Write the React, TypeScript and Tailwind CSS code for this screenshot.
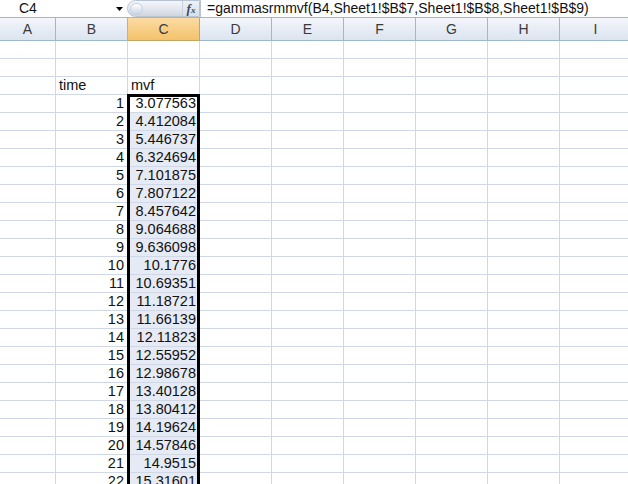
import React from "react";

const data: [number, string][] = [
  [1, "3.077563"],
  [2, "4.412084"],
  [3, "5.446737"],
  [4, "6.324694"],
  [5, "7.101875"],
  [6, "7.807122"],
  [7, "8.457642"],
  [8, "9.064688"],
  [9, "9.636098"],
  [10, "10.1776"],
  [11, "10.69351"],
  [12, "11.18721"],
  [13, "11.66139"],
  [14, "12.11823"],
  [15, "12.55952"],
  [16, "12.98678"],
  [17, "13.40128"],
  [18, "13.80412"],
  [19, "14.19624"],
  [20, "14.57846"],
  [21, "14.9515"],
  [22, "15.31601"],
];

const cols = ["A", "B", "C", "D", "E", "F", "G", "H", "I"];
const widths = ["w-[56px]", "w-[72px]", "w-[72px]", "w-[72px]", "w-[72px]", "w-[72px]", "w-[72px]", "w-[72px]", "w-[72px]"];

function Row({ b, c, kind }: { b?: React.ReactNode; c?: React.ReactNode; kind: "plain" | "label" | "active" | "sel" }) {
  return (
    <div className="flex h-[18px] shrink-0">
      {cols.map((col, i) => {
        let bg = "bg-white";
        if (i === 2 && kind === "sel") bg = "bg-[#e6eaf4]";
        let content: React.ReactNode = null;
        let align = "justify-end pr-[3px]";
        if (i === 1) {
          content = b;
          if (kind === "label") align = "justify-start pl-[3px]";
        }
        if (i === 2) {
          content = c;
          if (kind === "label") align = "justify-start pl-[3px]";
        }
        return (
          <div
            key={col}
            className={`${widths[i]} shrink-0 h-full border-r border-b border-[#d0d7e5] ${bg} flex items-center ${align} text-[14.5px] leading-none text-[#111] overflow-hidden whitespace-nowrap`}
          >
            {content}
          </div>
        );
      })}
    </div>
  );
}

export default function App() {
  return (
    <div
      className="w-[628px] h-[484px] overflow-hidden bg-white relative"
      style={{ fontFamily: '"Liberation Sans", Arial, sans-serif' }}
    >
      {/* Formula bar */}
      <div className="flex h-[18px] items-center bg-white border-b border-[#a5b6cc]">
        <div className="w-[112px] h-full flex items-center pl-[19px] text-[14px] text-[#111]">C4</div>
        <div className="w-[15px] h-full flex items-center justify-center">
          <svg width="7" height="4" viewBox="0 0 7 4">
            <path d="M0 0 H7 L3.5 4 Z" fill="#000" />
          </svg>
        </div>
        <div className="relative w-[73px] h-[17px] rounded-l-full bg-gradient-to-b from-[#f4f6fa] via-[#e4e8ef] to-[#cfd6e1] border border-[#b8c3d2] flex items-center">
          <div className="absolute left-[2px] top-[2px] w-[13px] h-[12px] rounded-full bg-gradient-to-b from-[#ffffff] to-[#c9d6e6] border border-[#c5cfdc]" />
          <div className="ml-auto w-[17px] h-full flex items-center justify-center border-l border-[#c8d0dc] bg-gradient-to-b from-[#eef2f8] to-[#d7dfea]">
            <span
              className="text-[13px] italic font-bold text-[#3b4a66] leading-none"
              style={{ fontFamily: '"Liberation Serif", serif' }}
            >
              f<span className="text-[9px]">x</span>
            </span>
          </div>
        </div>
        <div className="flex-1 h-full flex items-center pl-[6px] text-[14px] text-[#111] whitespace-nowrap overflow-hidden border-l border-[#b8c3d2]">
          =gammasrmmvf(B4,Sheet1!$B$7,Sheet1!$B$8,Sheet1!$B$9)
        </div>
      </div>

      {/* Column headers */}
      <div className="flex h-[23px]">
        {cols.map((col, i) => (
          <div
            key={col}
            className={`${widths[i]} shrink-0 h-full border-r border-b flex items-center justify-center text-[14px] ${
              col === "C"
                ? "bg-gradient-to-b from-[#fbdba3] to-[#f4c269] border-[#c5a46a] text-[#3a3a3a]"
                : "bg-gradient-to-b from-[#f3f6fb] to-[#dce4ef] border-[#9eb6ce] text-[#3a3a3a]"
            }`}
          >
            {col}
          </div>
        ))}
      </div>

      {/* Rows */}
      <Row kind="plain" />
      <Row kind="plain" />
      <Row kind="label" b="time" c="mvf" />
      {data.map(([n, v], idx) => (
        <Row key={n} kind={idx === 0 ? "active" : "sel"} b={n} c={v} />
      ))}

      {/* Selection border overlay */}
      <div className="absolute left-[127px] top-[94px] w-[73px] h-[400px] border-[3px] border-black pointer-events-none" />
    </div>
  );
}
